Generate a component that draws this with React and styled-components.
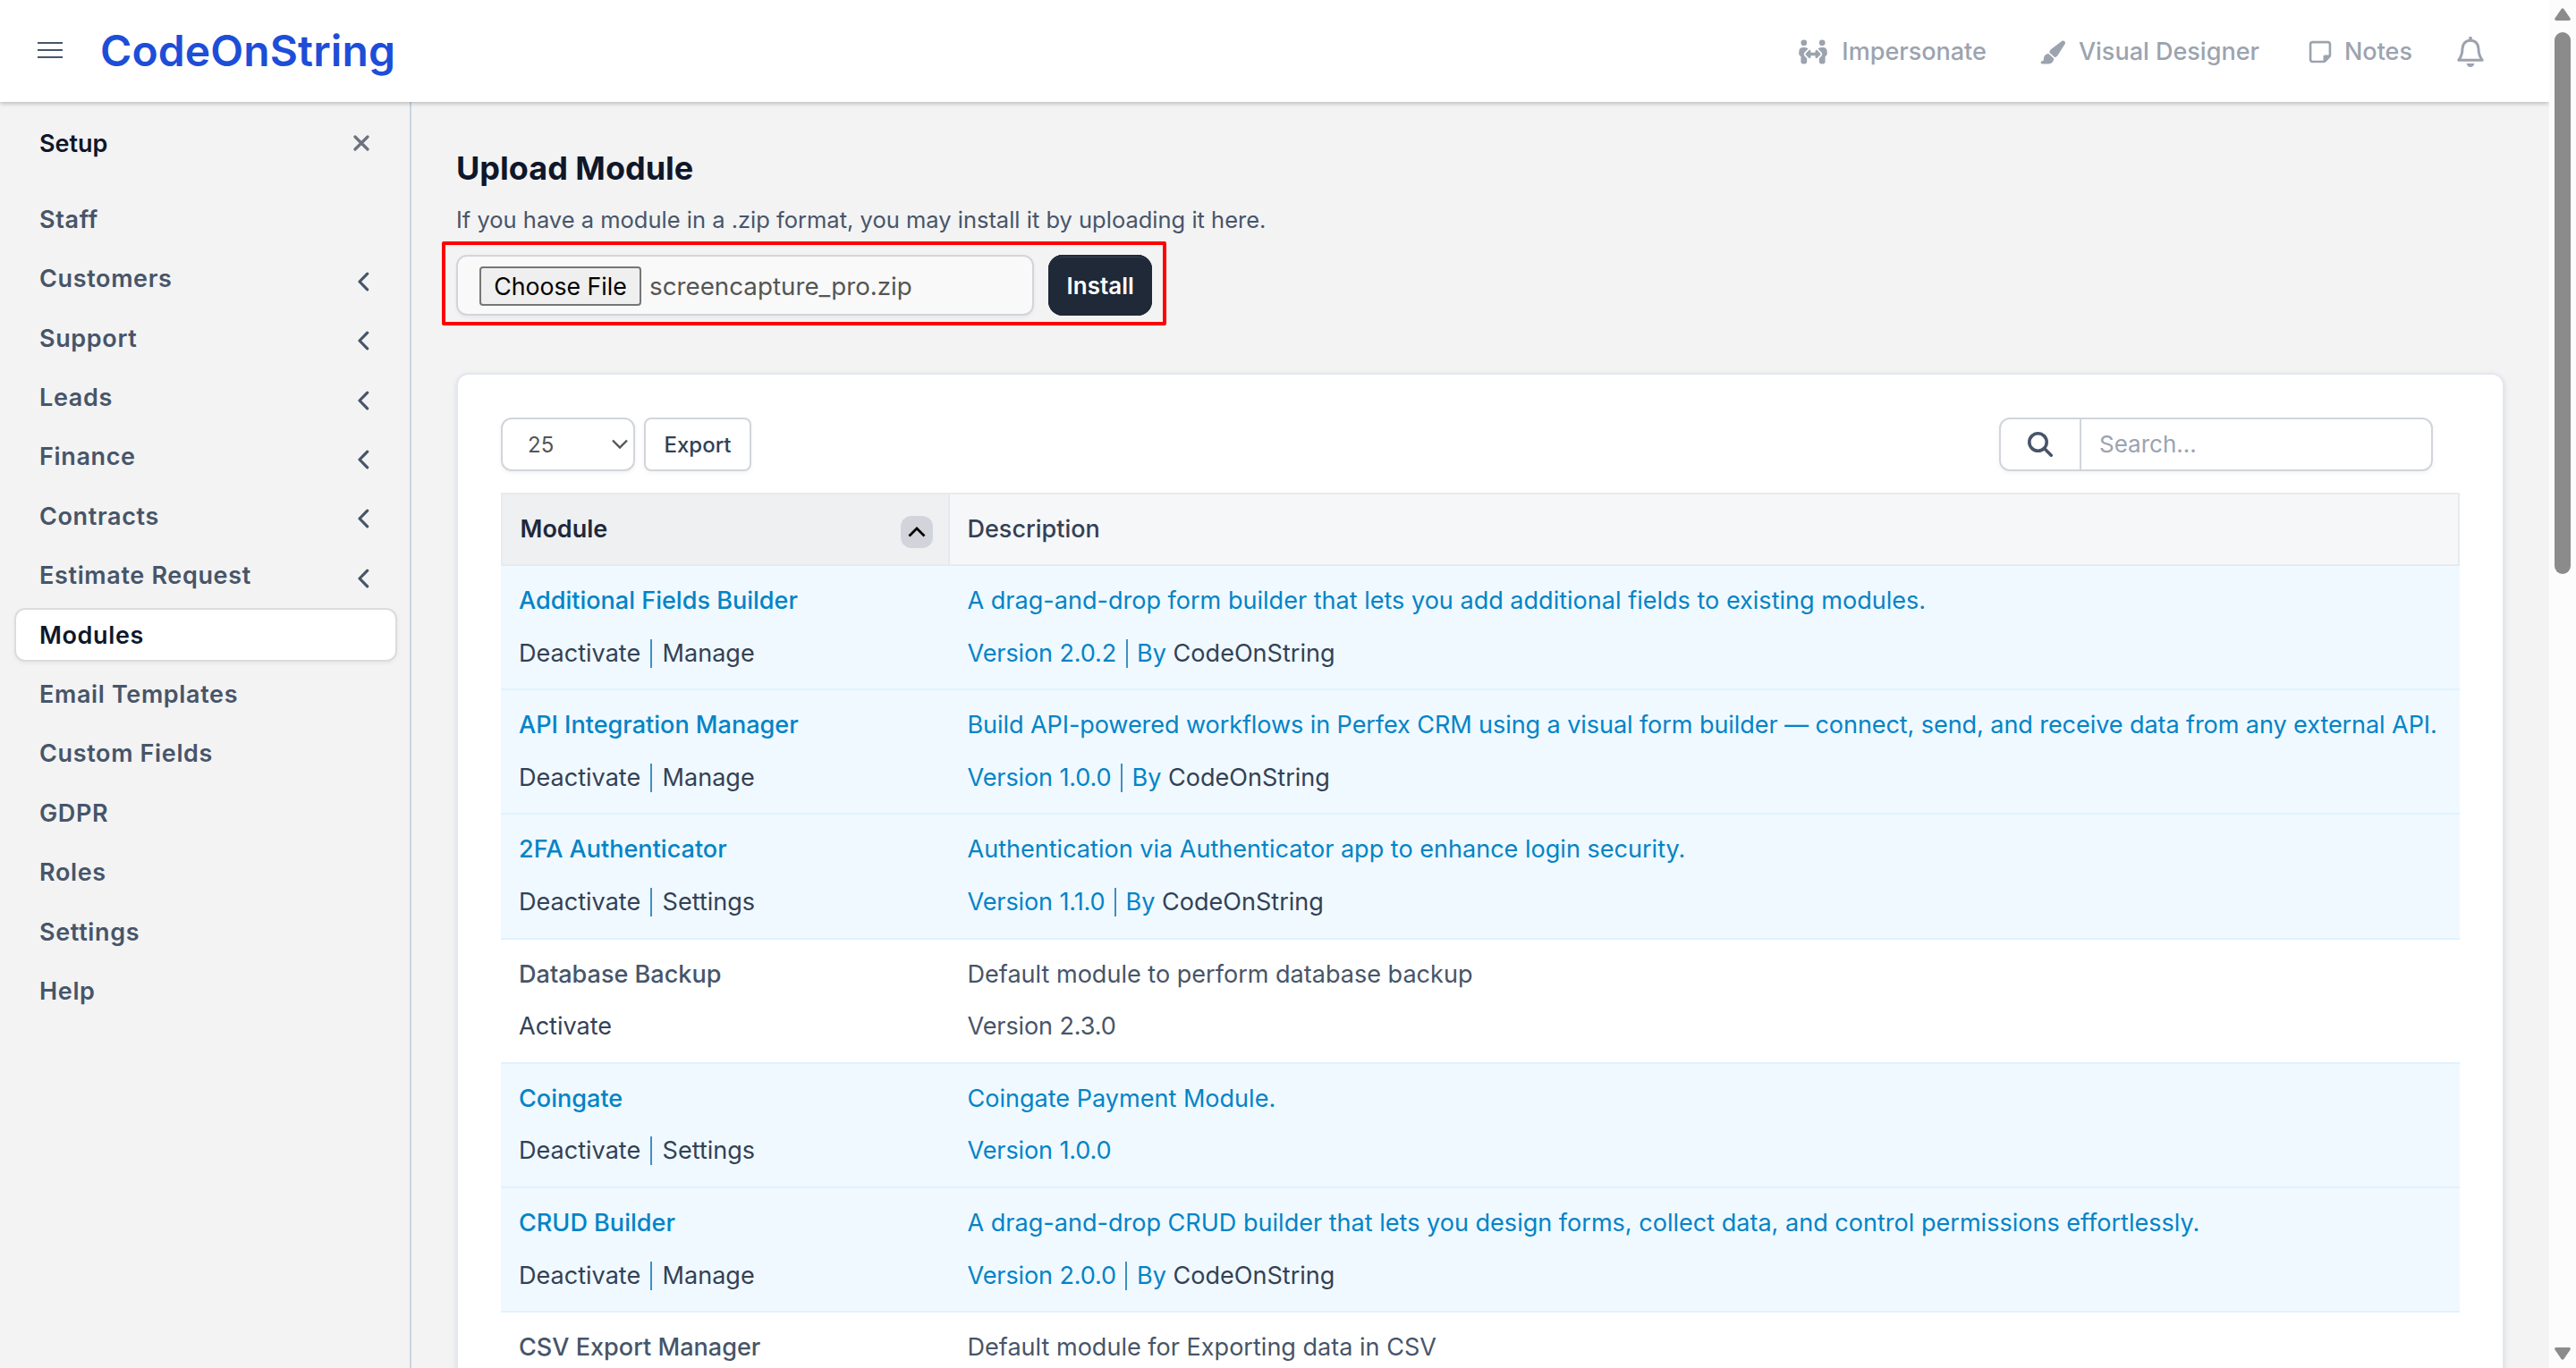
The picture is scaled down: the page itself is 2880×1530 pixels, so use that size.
import React from 'react';
import styled, { createGlobalStyle } from 'styled-components';
import { FaPeopleArrows, FaPaintbrush, FaRegNoteSticky } from 'react-icons/fa6';

const Global = createGlobalStyle`
  *, *::before, *::after { box-sizing: border-box; }
  html, body { margin: 0; background: #f3f3f3; overflow: hidden; }
  body { font-family: Inter, "Liberation Sans", sans-serif; font-size: 26px; color: #475569; }
  button, select, input { font-family: inherit; margin: 0; }
  a { color: inherit; text-decoration: none; }
`;

const Screen = styled.div`
  display: grid;
  grid-template-columns: minmax(0, 1fr) 30px;
  height: 1530px;
  overflow: hidden;
`;

const Page = styled.div`
  display: flex;
  flex-direction: column;
  height: 1530px;
  min-width: 0;
  overflow: hidden;
`;

const Header = styled.header`
  display: flex;
  align-items: center;
  flex: none;
  height: 114px;
  padding: 0 73px 0 42px;
  background: #fff;
  box-shadow: 0 1px 6px rgba(0, 0, 0, 0.2), 0 2px 4px rgba(0, 0, 0, 0.08);
  z-index: 2;
`;

const Hamburger = styled.svg`
  display: block;
  flex: none;
  width: 28px;
  height: 18px;
  margin-bottom: 2px;
  margin-right: 42px;
`;

const Brand = styled.a`
  font-size: 48px;
  line-height: 60px;
  font-weight: 600;
  letter-spacing: 0.1px;
  color: #1d4ed8;
  margin-right: auto;
`;

const TopLink = styled.a`
  display: flex;
  align-items: center;
  gap: ${(p) => p.$gap}px;
  margin-top: 2px;
  margin-right: ${(p) => p.$after}px;
  font-size: 27px;
  font-weight: 500;
  line-height: 40px;
  color: #9ca3af;
  white-space: nowrap;
  svg { display: block; flex: none; }
`;

const Body = styled.div`
  display: flex;
  flex: 1;
  min-height: 0;
`;

const Sidebar = styled.aside`
  flex: none;
  width: 460px;
  padding: 20px 14px 0 16px;
  border-right: 2px solid #cbd5e1;
`;

const SideHead = styled.div`
  display: flex;
  align-items: center;
  justify-content: space-between;
  height: 52px;
  margin-bottom: 29.4px;
  padding: 0 31px 0 28px;
  font-size: 27px;
  font-weight: 600;
  color: #0f172a;
`;

const SideItem = styled.a`
  display: flex;
  align-items: center;
  justify-content: space-between;
  height: 60px;
  margin-bottom: 6.4px;
  padding: 0 29px 0 26px;
  border: 2px solid ${(p) => (p.$active ? '#dcdcdc' : 'transparent')};
  border-radius: 12px;
  background: ${(p) => (p.$active ? '#fff' : 'transparent')};
  box-shadow: ${(p) => (p.$active ? '0 2px 4px rgba(0,0,0,0.05)' : 'none')};
  font-size: 27px;
  font-weight: 600;
  letter-spacing: 0.64px;
  color: ${(p) => (p.$active ? '#0f172a' : '#475569')};
  svg { display: block; margin-top: 6px; }
`;

const Main = styled.main`
  flex: 1;
  min-width: 0;
  padding: 49px 50px 0 50px;
`;

const Title = styled.h4`
  margin: 0;
  font-size: 36px;
  line-height: 50px;
  font-weight: 700;
  color: #0f172a;
`;

const Lead = styled.p`
  margin: 13px 0 4px;
  font-size: 25.5px;
  line-height: 40px;
`;

const UploadBox = styled.div`
  display: flex;
  gap: 16px;
  width: 810px;
  height: 94px;
  margin-left: -16px;
  padding: 11px 12px 11px 12px;
  border: 4px solid #ff0000;
  border-radius: 2px;
`;

const FileField = styled.div`
  display: flex;
  align-items: center;
  gap: 9px;
  width: 648px;
  height: 68px;
  padding: 2px 0 0 24px;
  border: 2px solid #d1d5db;
  border-radius: 12px;
  background: #f9f9f9;
  box-shadow: 0 2px 4px rgba(0, 0, 0, 0.05);
  font-size: 27.75px;
  color: #555;
`;

const ChooseFile = styled.button`
  width: 181px;
  height: 44px;
  padding: 0;
  border: 2px solid #767676;
  border-radius: 4px;
  background: #efefef;
  font-size: 26.7px;
  color: #000;
  white-space: nowrap;
`;

const Install = styled.button`
  width: 116px;
  height: 68px;
  padding: 0;
  border: 0;
  border-radius: 16px;
  background: #1f2937;
  box-shadow: inset 0 0 0 2px #1f2937, inset 0 4px 0 -1px #3b4453;
  font-size: 26px;
  font-weight: 600;
  color: #fff;
`;

const Panel = styled.section`
  width: 2290px;
  height: 1200px;
  margin-top: 53px;
  padding: 48px;
  border: 2px solid #e2e8f0;
  border-radius: 14px;
  background: #fff;
  box-shadow: 0 2px 6px rgba(0, 0, 0, 0.1);
`;

const Toolbar = styled.div`
  display: flex;
  align-items: center;
  gap: 10px;
  height: 60px;
  margin-bottom: 24px;
`;

const PageSize = styled.div`
  display: flex;
  align-items: center;
  justify-content: space-between;
  width: 150px;
  height: 60px;
  padding: 0 6px 0 28px;
  border: 2px solid #d1d5db;
  border-radius: 12px;
  box-shadow: 0 2px 4px rgba(0, 0, 0, 0.06);
  font-size: 24px;
  color: #555;
  svg { display: block; }
`;

const Export = styled.button`
  width: 120px;
  height: 60px;
  padding: 0;
  border: 2px solid #d1d5db;
  border-radius: 8px;
  background: #fff;
  box-shadow: 0 2px 4px rgba(0, 0, 0, 0.05);
  font-size: 24px;
  font-weight: 500;
  color: #334155;
`;

const Search = styled.div`
  display: flex;
  width: 485px;
  height: 60px;
  margin-left: auto;
  margin-right: 30px;
  border: 2px solid #d1d5db;
  border-radius: 12px;
  box-shadow: 0 2px 4px rgba(0, 0, 0, 0.05);
`;

const SearchIcon = styled.span`
  display: flex;
  align-items: center;
  justify-content: center;
  width: 90px;
  border-right: 2px solid #d1d5db;
`;

const SearchText = styled.span`
  padding-left: 20px;
  font-size: 26px;
  line-height: 56px;
  color: #9ca3af;
`;

const Row = styled.div`
  display: grid;
  grid-template-columns: 500px 1fr;
`;

const HeadRow = styled(Row)`
  height: 82px;
  border: 2px solid #e8eaed;
  background: #f6f7f9;
  color: #334155;
  font-size: 27px;
  font-weight: 500;
  line-height: 76px;
`;

const HeadCell = styled.div`
  display: flex;
  align-items: center;
  justify-content: space-between;
  padding: 0 17px 0 19.5px;
  ${(p) => p.$sorted && `
    background: #eff0f2;
    border-right: 2px solid #e6e8eb;
    color: #1e293b;
    font-weight: 600;
  `}
`;

const SortBadge = styled.span`
  display: flex;
  align-items: center;
  justify-content: center;
  width: 36px;
  height: 36px;
  margin-top: 6px;
  border-radius: 12px;
  background: #d1d5db;
`;

const ModuleRow = styled(Row)`
  height: 139.2px;
  padding-top: 19px;
  border-bottom: 2px solid #e0f2fe;
  background: ${(p) => (p.$on ? '#f0f9ff' : '#fff')};
  color: ${(p) => (p.$on ? '#0284c7' : '#475569')};
`;

const Cell = styled.div`
  padding-left: ${(p) => (p.$first ? 20 : 21.5)}px;
  font-size: 27.05px;
  line-height: 40px;
  white-space: nowrap;
`;

const Name = styled.div`
  margin-bottom: 18.6px;
  font-weight: ${(p) => (p.$strong ? 500 : 400)};
  letter-spacing: ${(p) => p.$tracking || 0}px;
`;

const Meta = styled.div`
  display: flex;
  gap: ${(p) => p.$gap || 10.5}px;
  a { color: #334155; }
`;

const Version = styled.span`
  letter-spacing: -0.12px;
`;

const Bar = styled.i`
  width: 2px;
  height: 32px;
  margin-top: 4px;
  background: #3f8fc4;
`;

const ScrollTrack = styled.div`
  display: flex;
  flex-direction: column;
  align-items: center;
  height: 1530px;
  padding: 9px 0 9px;
  background: #fcfcfc;
  svg { display: block; flex: none; }
`;

const ScrollThumb = styled.div`
  width: 18px;
  height: 606px;
  margin: 13px 0 auto;
  border-radius: 9px;
  background: #8b8b8b;
`;

const Arrow = ({ down }) => (
  <svg width="18" height="14" viewBox="0 0 18 14">
    <path
      transform={down ? 'rotate(180 9 7)' : undefined}
      d="M7.6 1Q9-.6 10.4 1L17.6 11.4Q18.4 14 16 14H2Q-.4 14 .4 11.4Z"
      fill="#8b8b8b"
    />
  </svg>
);

const Chevron = () => (
  <svg width="14" height="22" viewBox="0 0 14 22" fill="none" stroke="#475569" strokeWidth="3.2" strokeLinecap="round" strokeLinejoin="round">
    <path d="M11.7 2.2 3 11l8.7 8.8" />
  </svg>
);

const Bell = () => (
  <svg width="30" height="34" viewBox="0 0 30 34" fill="none">
    <path d="M15 1.5V4" stroke="#9ca3af" strokeWidth="3.6" strokeLinecap="round" />
    <path d="M15 4.2C9.6 4.2 6 8.300 6 13.5C6 19.5 5 22 1.8 26.2H28.2C25 22 24 19.5 24 13.5C24 8.300 20.4 4.2 15 4.2Z" stroke="#9ca3af" strokeWidth="3" strokeLinejoin="round" />
    <path d="M10.6 30H19.4C18.8 32.6 17.2 34 15 34C12.8 34 11.2 32.6 10.6 30Z" fill="#9ca3af" />
  </svg>
);

const menu = [
  ['Staff'], ['Customers', 1], ['Support', 1], ['Leads', 1], ['Finance', 1], ['Contracts', 1],
  ['Estimate Request', 1], ['Modules'], ['Email Templates'], ['Custom Fields'], ['GDPR'],
  ['Roles'], ['Settings'], ['Help'],
];

const modules = [
  { name: 'Additional Fields Builder', action: 'Manage', text: 'A drag-and-drop form builder that lets you add additional fields to existing modules.', version: '2.0.2', by: 'CodeOnString', on: true },
  { name: 'API Integration Manager', action: 'Manage', text: 'Build API-powered workflows in Perfex CRM using a visual form builder — connect, send, and receive data from any external API.', version: '1.0.0', by: 'CodeOnString', on: true, tracking: -0.085 },
  { name: '2FA Authenticator', action: 'Settings', text: 'Authentication via Authenticator app to enhance login security.', version: '1.1.0', by: 'CodeOnString', on: true },
  { name: 'Database Backup', text: 'Default module to perform database backup', version: '2.3.0', on: false },
  { name: 'Coingate', action: 'Settings', text: 'Coingate Payment Module.', version: '1.0.0', on: true },
  { name: 'CRUD Builder', action: 'Manage', text: 'A drag-and-drop CRUD builder that lets you design forms, collect data, and control permissions effortlessly.', version: '2.0.0', by: 'CodeOnString', on: true },
  { name: 'CSV Export Manager', text: 'Default module for Exporting data in CSV', on: false },
];

export default function App() {
  return (
    <Screen>
      <Global />
      <Page>
        <Header>
          <Hamburger viewBox="0 0 28 18" stroke="#475569" strokeWidth="2">
            <path d="M0 1h28M0 9h28M0 17h28" />
          </Hamburger>
          <Brand>CodeOnString</Brand>
          <TopLink $gap={15} $after={59}><FaPeopleArrows size={34} />Impersonate</TopLink>
          <TopLink $gap={15} $after={54}><FaPaintbrush size={29} />Visual Designer</TopLink>
          <TopLink $gap={13} $after={50}><FaRegNoteSticky size={28} />Notes</TopLink>
          <TopLink $gap={0} $after={0}><Bell /></TopLink>
        </Header>
        <Body>
          <Sidebar>
            <SideHead>
              Setup
              <svg width="18" height="18" viewBox="0 0 18 18" stroke="#6b7280" strokeWidth="3.2" strokeLinecap="round">
                <path d="M2 2l14 14M16 2 2 16" />
              </svg>
            </SideHead>
            {menu.map(([label, nested]) => (
              <SideItem key={label} $active={label === 'Modules'}>
                {label}
                {nested && <Chevron />}
              </SideItem>
            ))}
          </Sidebar>
          <Main>
            <Title>Upload Module</Title>
            <Lead>If you have a module in a .zip format, you may install it by uploading it here.</Lead>
            <UploadBox>
              <FileField>
                <ChooseFile>Choose File</ChooseFile>
                screencapture_pro.zip
              </FileField>
              <Install>Install</Install>
            </UploadBox>
            <Panel>
              <Toolbar>
                <PageSize>
                  25
                  <svg width="18" height="12" viewBox="0 0 18 12" fill="none" stroke="#555" strokeWidth="2.4">
                    <path d="M1 1.5l8 8 8-8" />
                  </svg>
                </PageSize>
                <Export>Export</Export>
                <Search>
                  <SearchIcon>
                    <svg width="28" height="28" viewBox="0 0 28 28" fill="none" stroke="#475569" strokeWidth="3.6" strokeLinecap="round">
                      <circle cx="11.5" cy="11.5" r="9.7" />
                      <path d="M18.8 18.8l7.4 7.4" />
                    </svg>
                  </SearchIcon>
                  <SearchText>Search...</SearchText>
                </Search>
              </Toolbar>
              <HeadRow>
                <HeadCell $sorted>
                  Module
                  <SortBadge>
                    <svg width="20" height="12" viewBox="0 0 20 12" fill="none" stroke="#000" strokeWidth="2.8">
                      <path d="M1.5 10.5 10 2l8.5 8.5" />
                    </svg>
                  </SortBadge>
                </HeadCell>
                <HeadCell>Description</HeadCell>
              </HeadRow>
              {modules.map((m) => (
                <ModuleRow key={m.name} $on={m.on}>
                  <Cell $first>
                    <Name $strong>{m.name}</Name>
                    {m.version && (
                      <Meta $gap={11.2}>
                        <a>{m.on ? 'Deactivate' : 'Activate'}</a>
                        {m.action && <><Bar /><a>{m.action}</a></>}
                      </Meta>
                    )}
                  </Cell>
                  <Cell>
                    <Name $tracking={m.tracking}>{m.text}</Name>
                    {m.version && (
                      <Meta>
                        <Version>Version {m.version}</Version>
                        {m.by && <><Bar /><span>By <a>{m.by}</a></span></>}
                      </Meta>
                    )}
                  </Cell>
                </ModuleRow>
              ))}
            </Panel>
          </Main>
        </Body>
      </Page>
      <ScrollTrack>
        <Arrow />
        <ScrollThumb />
        <Arrow down />
      </ScrollTrack>
    </Screen>
  );
}
